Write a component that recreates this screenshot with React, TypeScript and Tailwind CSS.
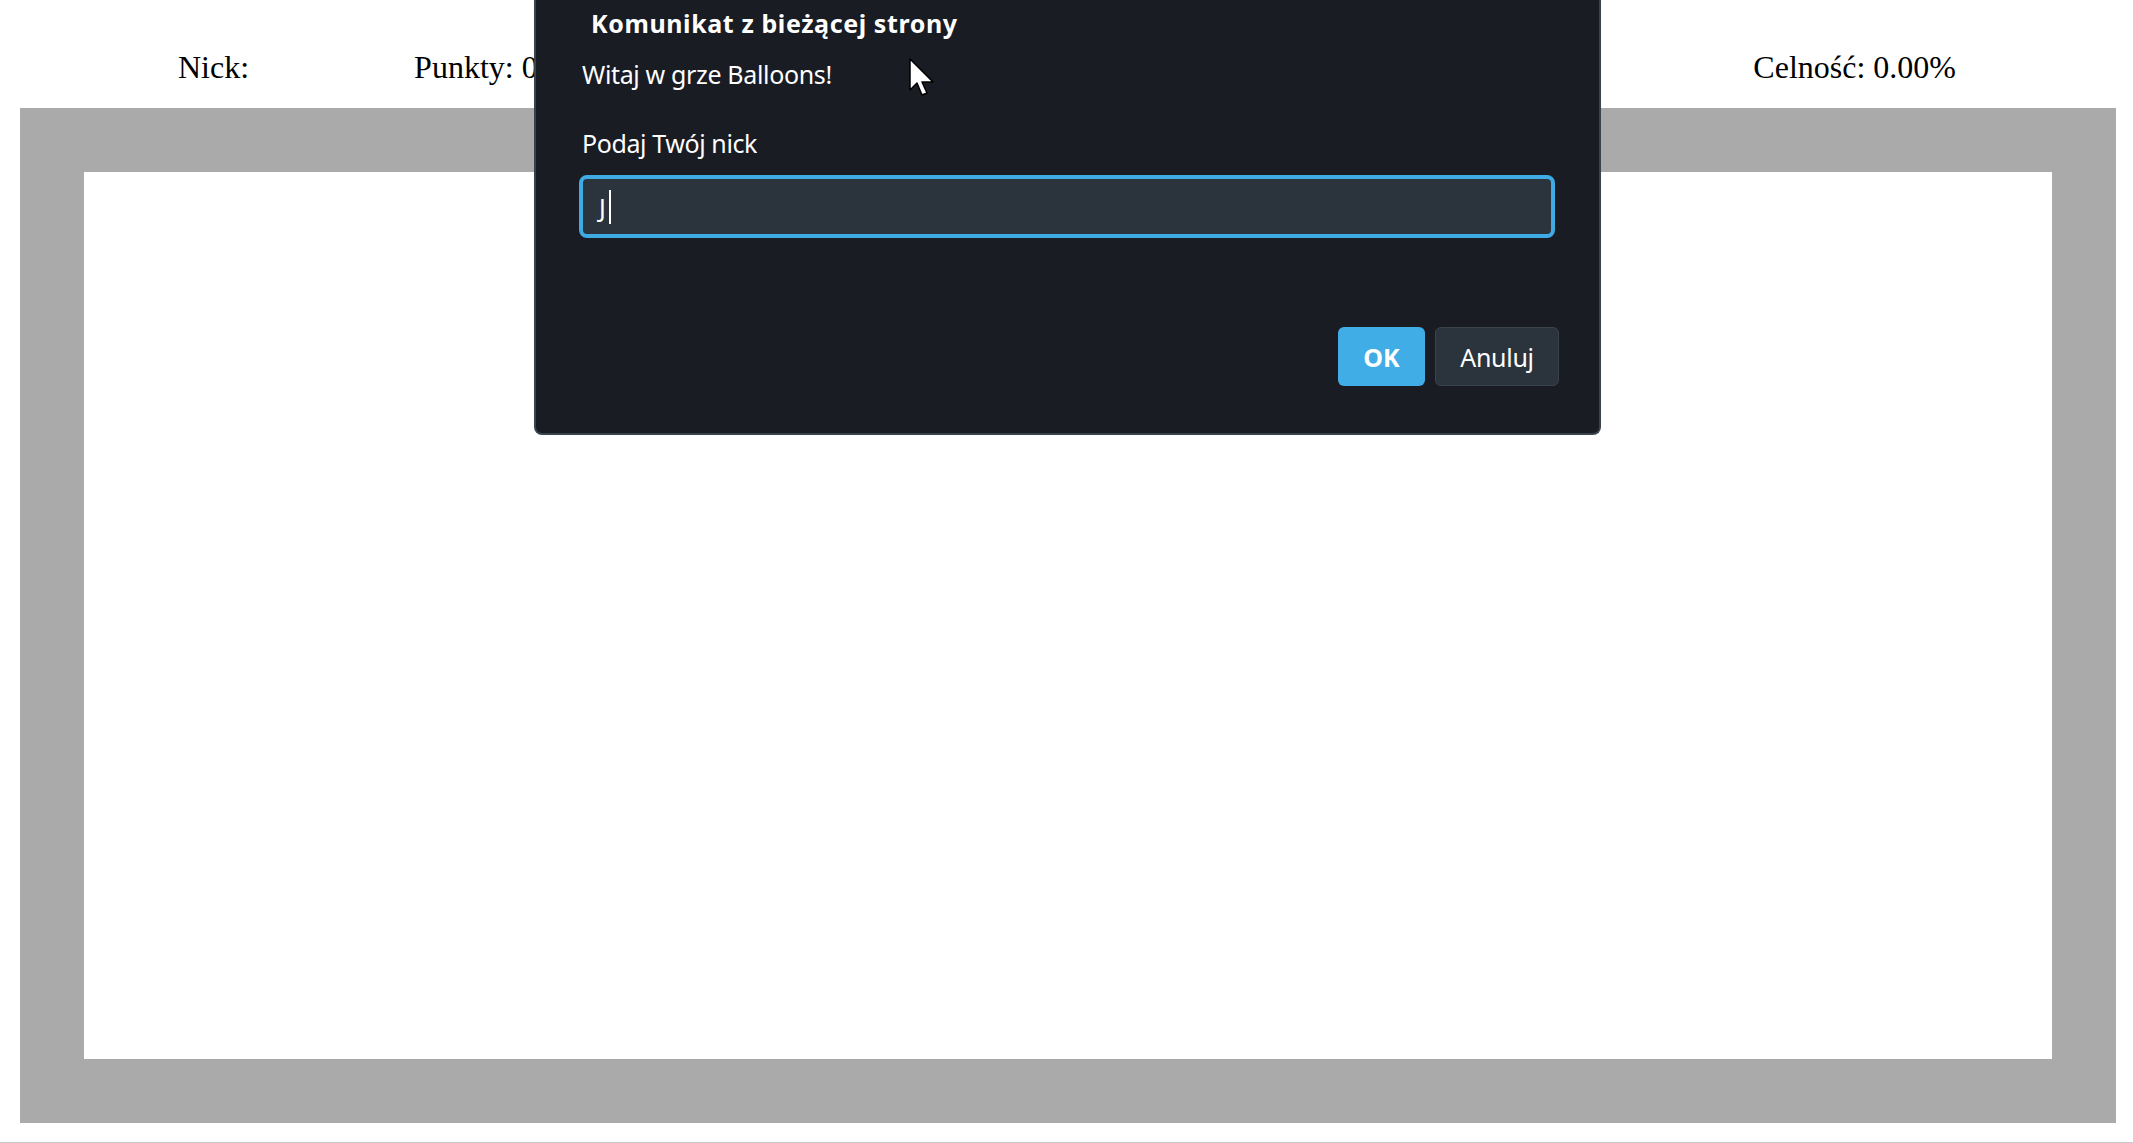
import React from 'react';

function Cursor() {
  return (
    <svg
      className="absolute left-[909px] top-[58px]"
      width="26"
      height="38"
      viewBox="-1 -1 26 38"
      fill="none"
    >
      <path d="M0 0 L0 31 L7 24 L12 36 L17 34 L12 23 L23 23 Z" fill="#ffffff" stroke="#000000" strokeWidth="1.5" strokeLinejoin="round" />
    </svg>
  );
}

function PromptDialog() {
  return (
    <div className="absolute left-[534px] top-0 w-[1067px] h-[435px] bg-[#191c23] border-x-2 border-b-2 border-[#3a424b] rounded-b-[8px] text-white font-['Noto_Sans',sans-serif] text-[25px] leading-[34px]">
      <div className="flex flex-col">
        {/* Title */}
        <div className="mt-[6px] ml-[55px] font-bold tracking-[0.6px]">Komunikat z bieżącej strony</div>
        <div className="mt-[17px] ml-[46px] tracking-[-0.35px]">Witaj w grze Balloons!</div>
        <div className="mt-[35px] ml-[46px] tracking-[-0.4px]">Podaj Twój nick</div>

        {/* Input */}
        <div className="mt-[15px] ml-[43px] w-[976px] h-[63px] bg-[#2b343d] border-[4px] border-[#3fabe4] rounded-[8px] flex items-center pl-[16px]">
          <span>J</span>
          <span className="ml-[3px] w-[2px] h-[34px] bg-white" />
        </div>

        {/* Buttons */}
        <div className="mt-[89px] mr-[40px] flex justify-end gap-[10px]">
          <button className="w-[87px] h-[59px] rounded-[6px] bg-[#41ade6] font-bold text-white">OK</button>
          <button className="w-[124px] h-[59px] rounded-[6px] bg-[#2b343d] border border-[#3a434c] text-white tracking-[-0.3px]">Anuluj</button>
        </div>
      </div>
    </div>
  );
}

export default function App() {
  return (
    <div className="relative w-full h-[1143px] overflow-hidden bg-white border-b border-[#c9c9c9] font-['Liberation_Serif',serif] text-black">
      {/* Stats bar */}
      <div className="h-[108px] flex justify-between pl-[178px] pr-[177px] pt-[49px] text-[32px] leading-[36px]">
        <div className="flex">
          <span>Nick:</span>
          <span className="ml-[165px]">Punkty: 0</span>
        </div>
        <span>Celność: 0.00%</span>
      </div>

      {/* Game board */}
      <div className="ml-[20px] w-[2096px] h-[1015px] bg-[#a9aaa9] p-[64px]">
        <div className="w-full h-full bg-white" />
      </div>

      <PromptDialog />
      <Cursor />
    </div>
  );
}
